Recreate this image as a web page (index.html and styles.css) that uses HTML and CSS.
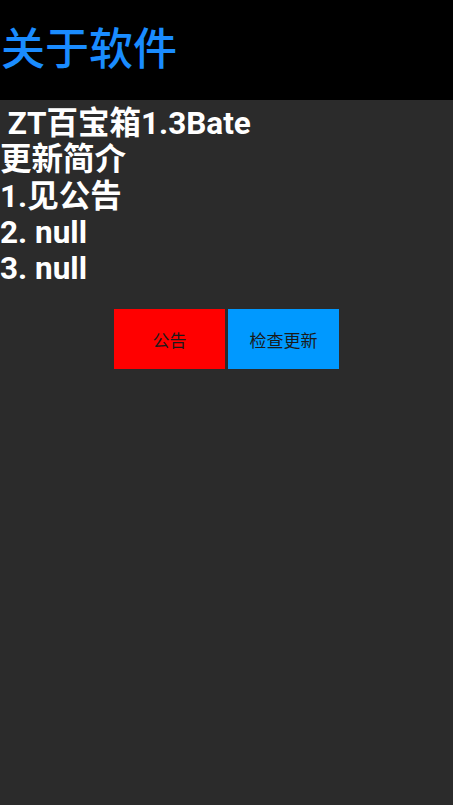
FILE: index.html
```html
<!DOCTYPE html>
<html lang="zh">
<head>
<meta charset="utf-8">
<title>关于软件</title>
<link rel="stylesheet" href="styles.css">
</head>
<body>
<header class="bar">
  <h1 class="title">关于软件</h1>
</header>
<main class="content">
  <div class="info">
    <p class="line">&nbsp;ZT百宝箱1.3Bate</p>
    <p class="line">更新简介</p>
    <p class="line">1.见公告</p>
    <p class="line">2. null</p>
    <p class="line">3. null</p>
  </div>
  <div class="actions">
    <button class="btn btn-red">公告</button>
    <button class="btn btn-blue">检查更新</button>
  </div>
</main>
</body>
</html>
```
FILE: styles.css
```css
html, body {
  margin: 0;
  padding: 0;
  height: 100%;
  background: #2b2b2b;
}
body {
  display: flex;
  flex-direction: column;
  font-family: Roboto, "Noto Sans CJK SC", sans-serif;
}
.bar {
  height: 100px;
  background: #000;
  display: flex;
  align-items: center;
  flex-shrink: 0;
}
.title {
  margin: 0 0 0 1px;
  font-size: 44px;
  font-weight: 500;
  color: #1a8cff;
  line-height: 1;
}
.content {
  flex: 1;
  background: #2b2b2b;
  padding-top: 6px;
}
.line {
  margin: 0;
  font-size: 31.5px;
  font-weight: 700;
  line-height: 36.3px;
  color: #fff;
  white-space: pre;
}
.actions {
  display: flex;
  justify-content: center;
  gap: 3px;
  margin-top: 22px;
}
.btn {
  width: 111px;
  height: 60px;
  border: none;
  padding: 0;
  font-family: Roboto, "Noto Sans CJK SC", sans-serif;
  font-size: 17px;
  color: #1a1a1a;
}
.btn-red { background: #ff0000; }
.btn-blue { background: #0099ff; }
```
